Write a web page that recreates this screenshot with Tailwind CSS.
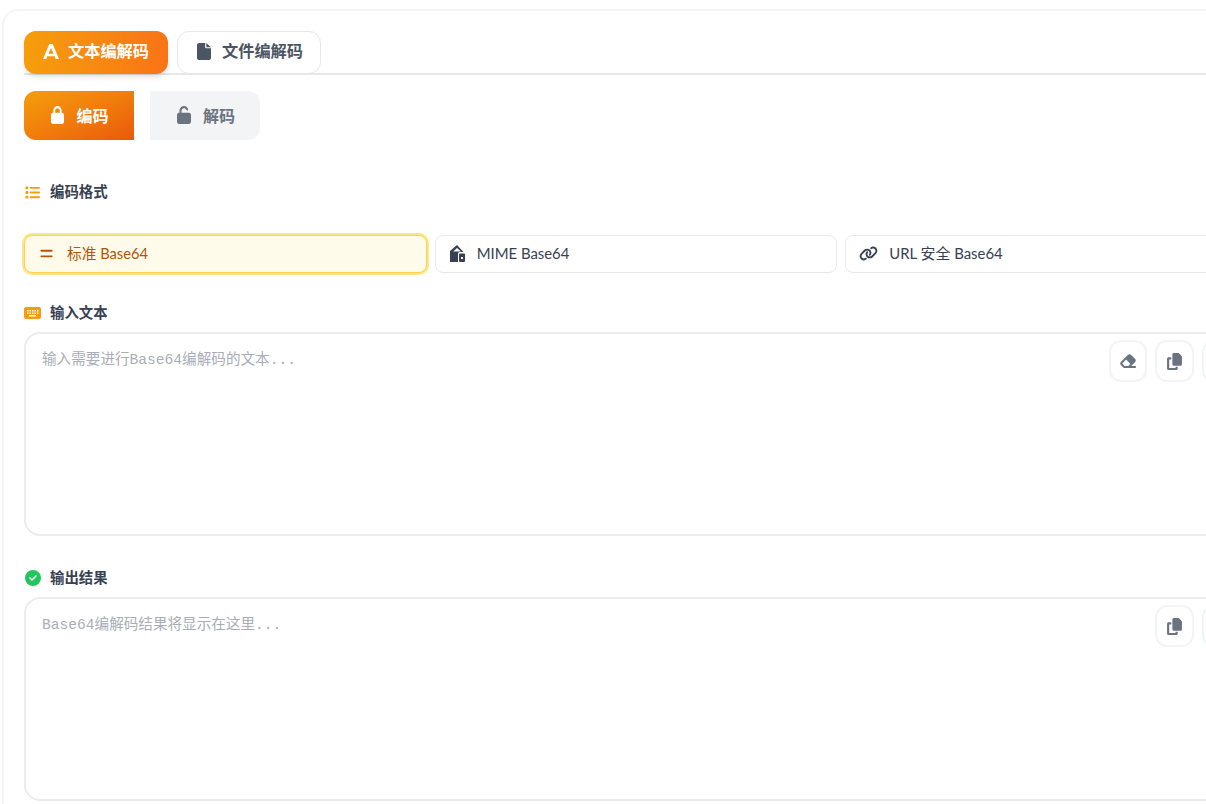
<!DOCTYPE html>
<html lang="zh-CN">
<head>
    <meta charset="UTF-8">
    <title>Base64 编解码</title>
    <script src="https://cdn.jsdelivr.net/npm/@tailwindcss/browser@4"></script>
</head>
<body class="bg-white overflow-hidden h-[804px] font-['Lato','Noto_Sans_CJK_SC',sans-serif]">
    <div class="w-[1268px] ml-[2px] mt-[9px] border-2 border-[#f3f4f6] rounded-2xl pl-5 pr-5 pt-[20px] pb-10">
        <!-- tabs -->
        <div class="flex gap-[9px] border-b-2 border-[#e5e7eb] h-[44px]">
            <button class="w-[144px] h-[43px] pb-[2px] rounded-xl bg-gradient-to-r from-[#f59e0b] to-[#f97316] text-white text-[16.2px] font-semibold flex items-center justify-center gap-[9px] shadow-md">
                <svg class="w-4 h-[15px] fill-current" viewBox="0 0 448 448" preserveAspectRatio="none"><path d="M176 0h96l176 448h-92l-30-84H122l-30 84H0L176 0zM224 120l-74 168h148L224 120z" fill-rule="evenodd"/></svg>
                文本编解码
            </button>
            <button class="w-[144px] h-[43px] pb-[2px] pl-[2px] rounded-xl bg-white border border-[#e5e7eb] text-[#4b5563] text-[16.2px] font-semibold flex items-center justify-center gap-[11px]">
                <svg class="w-[14px] h-[17px] fill-current" viewBox="0 0 384 512" preserveAspectRatio="none"><path d="M0 64C0 28.7 28.7 0 64 0H224V128c0 17.7 14.3 32 32 32H384V448c0 35.3-28.7 64-64 64H64c-35.3 0-64-28.7-64-64V64zm384 64H256V0L384 128z"/></svg>
                文件编解码
            </button>
        </div>

        <!-- mode -->
        <div class="flex gap-4 mt-[16px]">
            <button class="w-[110px] h-[49px] pl-[2px] rounded-l-xl bg-gradient-to-br from-[#f59e0b] to-[#ea580c] text-white text-base font-semibold flex items-center justify-center gap-3">
                <svg class="w-[13px] h-[18px] mb-[2px] fill-current" viewBox="0 0 448 512" preserveAspectRatio="none"><path d="M144 144v48H304V144c0-44.2-35.8-80-80-80s-80 35.8-80 80zM80 192V144C80 64.5 144.5 0 224 0s144 64.5 144 144v48h16c35.3 0 64 28.7 64 64V448c0 35.3-28.7 64-64 64H64c-35.3 0-64-28.7-64-64V256c0-35.3 28.7-64 64-64H80z"/></svg>
                编码
            </button>
            <button class="w-[110px] h-[49px] pl-[2px] rounded-r-xl bg-[#f3f4f6] text-[#6b7280] text-base font-semibold flex items-center justify-center gap-3">
                <svg class="w-[14px] h-[18px] mb-[2px] fill-current" viewBox="0 0 448 512" preserveAspectRatio="none"><path d="M144 144c0-44.2 35.8-80 80-80c31.9 0 59.4 18.6 72.3 45.7c7.6 16 26.7 22.8 42.6 15.2s22.8-26.7 15.2-42.6C331 33.7 281.5 0 224 0C144.5 0 80 64.5 80 144v48H64c-35.3 0-64 28.7-64 64V448c0 35.3 28.7 64 64 64H384c35.3 0 64-28.7 64-64V256c0-35.3-28.7-64-64-64H144V144z"/></svg>
                解码
            </button>
        </div>

        <!-- format -->
        <div class="flex items-center gap-[10px] mt-[41px] h-[22px] text-[14.4px] font-semibold text-[#374151]">
            <svg class="w-[15px] h-[15px] ml-[1px] fill-[#f59e0b]" viewBox="0 0 512 512"><path d="M40 48C26.7 48 16 58.7 16 72v48c0 13.3 10.7 24 24 24H88c13.3 0 24-10.7 24-24V72c0-13.3-10.7-24-24-24H40zM192 64c-17.7 0-32 14.3-32 32s14.3 32 32 32H480c17.7 0 32-14.3 32-32s-14.3-32-32-32H192zm0 160c-17.7 0-32 14.3-32 32s14.3 32 32 32H480c17.7 0 32-14.3 32-32s-14.3-32-32-32H192zm0 160c-17.7 0-32 14.3-32 32s14.3 32 32 32H480c17.7 0 32-14.3 32-32s-14.3-32-32-32H192zM16 232v48c0 13.3 10.7 24 24 24H88c13.3 0 24-10.7 24-24V232c0-13.3-10.7-24-24-24H40c-13.3 0-24 10.7-24 24zM40 368c-13.3 0-24 10.7-24 24v48c0 13.3 10.7 24 24 24H88c13.3 0 24-10.7 24-24V392c0-13.3-10.7-24-24-24H40z"/></svg>
            编码格式
        </div>
        <div class="grid grid-cols-3 gap-2 mt-[32px] text-[14.9px]">
            <button class="h-[38px] pb-[1px] rounded-lg bg-[#fffbeb] border border-[#fcd34d] ring-2 ring-[#fde68a] text-[#b45309] text-[14.7px] flex items-center gap-[13px] pl-[14px]">
                <svg class="w-[15px] h-[15px] fill-current" viewBox="0 0 448 512"><path d="M48 128c-17.7 0-32 14.3-32 32s14.3 32 32 32H400c17.7 0 32-14.3 32-32s-14.3-32-32-32H48zm0 192c-17.7 0-32 14.3-32 32s14.3 32 32 32H400c17.7 0 32-14.3 32-32s-14.3-32-32-32H48z"/></svg>
                标准 Base64
            </button>
            <button class="h-[38px] pb-[1px] rounded-lg bg-white border border-[#e9eaee] text-[#374151] flex items-center gap-[12px] pl-[14px]">
                <svg class="w-[15px] h-[17px] fill-current" viewBox="0 0 15 17"><path fill-rule="evenodd" d="M7 0 0 6v11h8V9c0-1.2.8-2 2-2h3.5L7 0zM7 3 3.2 6.6H8.5L11 6.4 7 3z"/><path fill-rule="evenodd" d="M10 8.5h4a1 1 0 0 1 1 1V16a1 1 0 0 1-1 1h-4a1 1 0 0 1-1-1V9.500a1 1 0 0 1 1-1zM11 12v2h2v-2h-2z"/></svg>
                MIME Base64
            </button>
            <button class="h-[38px] pb-[1px] rounded-lg bg-white border border-[#e9eaee] text-[#374151] flex items-center gap-[11px] pl-[13px]">
                <svg class="w-[19px] h-[15px] fill-current" viewBox="0 0 640 512"><path d="M579.8 267.7c56.5-56.5 56.5-148 0-204.5c-50-50-128.8-56.5-186.3-15.4l-1.6 1.1c-14.4 10.3-17.7 30.3-7.4 44.6s30.3 17.7 44.6 7.4l1.6-1.1c32.1-22.9 76-19.3 103.8 8.6c31.5 31.5 31.5 82.5 0 114L422.3 334.8c-31.5 31.5-82.5 31.5-114 0c-27.9-27.9-31.5-71.8-8.6-103.8l1.1-1.6c10.3-14.4 6.9-34.4-7.4-44.6s-34.4-6.9-44.6 7.4l-1.1 1.6C206.5 251.2 213 330 263 380c56.5 56.5 148 56.5 204.5 0L579.8 267.7zM60.2 244.3c-56.5 56.5-56.5 148 0 204.5c50 50 128.8 56.5 186.3 15.4l1.6-1.1c14.4-10.3 17.7-30.3 7.4-44.6s-30.3-17.7-44.6-7.4l-1.6 1.1c-32.1 22.9-76 19.3-103.8-8.6C74 372 74 321 105.5 289.5L217.7 177.2c31.5-31.5 82.5-31.5 114 0c27.9 27.9 31.5 71.8 8.6 103.9l-1.1 1.6c-10.3 14.4-6.9 34.4 7.4 44.6s34.4 6.9 44.6-7.4l1.1-1.6C433.5 260.8 427 182 377 132c-56.5-56.5-148-56.5-204.5 0L60.2 244.3z"/></svg>
                URL 安全 Base64
            </button>
        </div>

        <!-- input -->
        <div class="flex items-center gap-[9px] mt-[29px] h-[22px] text-[14.4px] font-semibold text-[#374151]">
            <svg class="w-[17px] h-[14px]" viewBox="0 0 17 14"><rect y="1" width="17" height="12" rx="2" fill="#f59e0b"/><path d="M3 4h1.5v1.5H3zM5.5 4H7v1.5H5.5zM8 4h1.5v1.5H8zM10.5 4H12v1.5h-1.5zM13 4h1.500v1.5H13zM3 6.5h1.5V8H3zM5.5 6.5H7V8H5.5zM8 6.5h1.5V8H8zM10.5 6.5H12V8h-1.5zM13 6.5h1.500V8H13zM5 9h7v1.5H5z" fill="#fff"/></svg>
            输入文本
        </div>
        <div class="relative mt-[8px] h-[204px] border-2 border-[#ebecf0] rounded-2xl">
            <textarea class="w-full h-full bg-transparent resize-none outline-none px-4 py-4 text-[14.6px] font-['Liberation_Mono','Noto_Sans_CJK_SC',monospace] placeholder:text-[#a9adb8]" placeholder="输入需要进行Base64编解码的文本..."></textarea>
            <div class="absolute top-[6px] right-[6px] flex gap-2">
                <button class="w-[38.5px] h-[42px] bg-white border-2 border-[#f3f4f6] rounded-xl flex items-center justify-center text-[#6b7280]">
                    <svg class="w-5 h-4 fill-current" viewBox="0 0 576 512"><path d="M290.7 57.4L57.4 290.7c-25 25-25 65.5 0 90.5l80 80c12 12 28.3 18.7 45.3 18.7H288h9.4H512c17.7 0 32-14.3 32-32s-14.3-32-32-32H387.9L518.6 285.3c25-25 25-65.5 0-90.5L381.3 57.4c-25-25-65.5-25-90.5 0zM297.4 416H288l-105.4 0-80-80L227.3 211.3 364.7 348.7 297.4 416z"/></svg>
                </button>
                <button class="w-[38.5px] h-[42px] bg-white border-2 border-[#f3f4f6] rounded-xl flex items-center justify-center text-[#6b7280]">
                    <svg class="w-[15px] h-[17px] fill-current" viewBox="0 0 448 512"><path d="M208 0H332.1c12.7 0 24.9 5.1 33.9 14.1l67.9 67.9c9 9 14.1 21.2 14.1 33.9V336c0 26.5-21.5 48-48 48H208c-26.5 0-48-21.5-48-48V48c0-26.5 21.5-48 48-48zM48 128h80v64H64V448H256V416h64v48c0 26.5-21.5 48-48 48H48c-26.5 0-48-21.5-48-48V176c0-26.5 21.5-48 48-48z"/></svg>
                </button>
                <button class="w-[38.5px] h-[42px] bg-white border-2 border-[#f3f4f6] rounded-xl"></button>
            </div>
        </div>

        <!-- output -->
        <div class="flex items-center gap-[9px] mt-[31px] h-[22px] text-[14.4px] font-semibold text-[#374151]">
            <svg class="w-4 h-4 ml-[1px] fill-[#22c55e]" viewBox="0 0 512 512"><path d="M256 512A256 256 0 1 0 256 0a256 256 0 1 0 0 512zM369 209L241 337c-9.4 9.4-24.6 9.4-33.9 0l-64-64c-9.4-9.4-9.4-24.6 0-33.9s24.6-9.4 33.9 0l47 47L335 175c9.4-9.4 24.6-9.4 33.9 0s9.4 24.6 0 33.9z"/></svg>
            输出结果
        </div>
        <div class="relative mt-[8px] h-[204px] border-2 border-[#ebecf0] rounded-2xl">
            <textarea readonly class="w-full h-full bg-transparent resize-none outline-none px-4 py-4 text-[14.6px] font-['Liberation_Mono','Noto_Sans_CJK_SC',monospace] placeholder:text-[#a9adb8]" placeholder="Base64编解码结果将显示在这里..."></textarea>
            <div class="absolute top-[6px] right-[6px] flex gap-2">
                <button class="w-[38.5px] h-[42px] bg-white border-2 border-[#f3f4f6] rounded-xl flex items-center justify-center text-[#6b7280]">
                    <svg class="w-[15px] h-[17px] fill-current" viewBox="0 0 448 512"><path d="M208 0H332.1c12.7 0 24.9 5.1 33.9 14.1l67.9 67.9c9 9 14.1 21.2 14.1 33.9V336c0 26.5-21.5 48-48 48H208c-26.5 0-48-21.5-48-48V48c0-26.5 21.5-48 48-48zM48 128h80v64H64V448H256V416h64v48c0 26.5-21.5 48-48 48H48c-26.5 0-48-21.5-48-48V176c0-26.5 21.5-48 48-48z"/></svg>
                </button>
                <button class="w-[38.5px] h-[42px] bg-white border-2 border-[#f3f4f6] rounded-xl"></button>
            </div>
        </div>
    </div>
</body>
</html>
